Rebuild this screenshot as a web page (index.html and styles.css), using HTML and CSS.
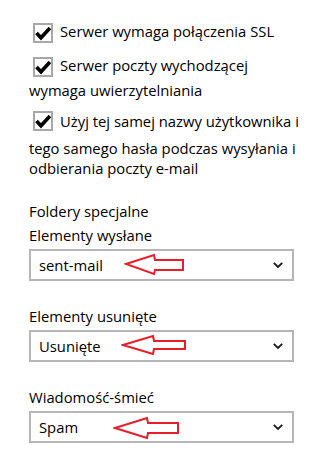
FILE: index.html
```html
<!DOCTYPE html>
<html lang="pl">
<head>
<meta charset="utf-8">
<title>Ustawienia konta</title>
<link rel="stylesheet" href="styles.css">
</head>
<body>
<main class="panel">
  <section class="options">
    <p class="opt"><span class="cb"><svg viewBox="0 0 16 16" width="16" height="16"><polyline points="1.5,8 6,12.8 15,3" /></svg></span>Serwer wymaga połączenia SSL</p>
    <p class="opt"><span class="cb"><svg viewBox="0 0 16 16" width="16" height="16"><polyline points="1.5,8 6,12.8 15,3" /></svg></span>Serwer poczty wychodzącej<br>wymaga uwierzytelniania</p>
    <p class="opt opt-tall"><span class="cb"><svg viewBox="0 0 16 16" width="16" height="16"><polyline points="1.5,8 6,12.8 15,3" /></svg></span>Użyj tej samej nazwy użytkownika i<br>tego samego hasła podczas wysyłania i<br>odbierania poczty e-mail</p>
  </section>

  <section class="folders">
    <h2 class="section-title">Foldery specjalne</h2>

    <div class="field">
      <div class="field-label">Elementy wysłane</div>
      <div class="select">
        <span class="select-value">sent-mail</span>
        <svg class="chev" viewBox="0 0 10 6" width="10" height="6"><polyline points="0.8,0.8 5,5 9.2,0.8" /></svg>
        <svg class="arrow arrow-1" viewBox="0 0 61 23" width="61" height="23"><polygon points="2,11 30,2 31,7 59,7 59,17 31,17 30,21" /></svg>
      </div>
    </div>

    <div class="field">
      <div class="field-label">Elementy usunięte</div>
      <div class="select">
        <span class="select-value">Usunięte</span>
        <svg class="chev" viewBox="0 0 10 6" width="10" height="6"><polyline points="0.8,0.8 5,5 9.2,0.8" /></svg>
        <svg class="arrow arrow-2" viewBox="0 0 66 22" width="66" height="22"><polygon points="2,11 32,2 33,7 64,7 64,15 33,15 32,20" /></svg>
      </div>
    </div>

    <div class="field">
      <div class="field-label">Wiadomość-śmieć</div>
      <div class="select">
        <span class="select-value">Spam</span>
        <svg class="chev" viewBox="0 0 10 6" width="10" height="6"><polyline points="0.8,0.8 5,5 9.2,0.8" /></svg>
        <svg class="arrow arrow-3" viewBox="0 0 67 24" width="67" height="24"><polygon points="2,12 34,2 35,7 65,7 65,17 35,17 34,22" /></svg>
      </div>
    </div>
  </section>
</main>
</body>
</html>
```

FILE: styles.css
```css
html, body {
  margin: 0;
  padding: 0;
  background: #ffffff;
}

body {
  font-family: "Open Sans", "Noto Sans", sans-serif;
  font-size: 14.8px;
  line-height: 20px;
  color: #000000;
}

.panel {
  width: 265px;
  padding: 20px 0 0 29px;
}

.options {
  display: flex;
  flex-direction: column;
  gap: 8px;
}

.opt {
  margin: 0;
  white-space: nowrap;
}

.cb {
  display: inline-block;
  box-sizing: border-box;
  width: 20px;
  height: 20px;
  border: 2px solid #a8a8a8;
  background: #ffffff;
  vertical-align: middle;
  margin: 3px 7px 3px 4px;
}

.opt-tall .cb {
  margin-bottom: 7px;
}

.cb svg {
  display: block;
}

.cb polyline {
  fill: none;
  stroke: #000000;
  stroke-width: 3.6;
}

.folders {
  margin-top: 23px;
}

.section-title {
  margin: 0 0 4px;
  font-size: 14.8px;
  font-weight: normal;
  line-height: 20px;
}

.field + .field {
  margin-top: 25px;
}

.field-label {
  margin-bottom: 4px;
}

.select {
  position: relative;
  box-sizing: border-box;
  height: 32px;
  border: 2px solid #b6b6b6;
  display: flex;
  align-items: center;
  justify-content: space-between;
  padding: 0 9px 0 8px;
}

.select-value {
  line-height: 28px;
}

.chev polyline {
  fill: none;
  stroke: #1a1a1a;
  stroke-width: 1.8;
}

.chev {
  display: block;
}

.arrow {
  position: absolute;
  display: block;
}

.arrow polygon {
  fill: none;
  stroke: #e51f2a;
  stroke-width: 2;
  stroke-linejoin: miter;
}

.arrow-1 {
  left: 93px;
  top: 2px;
}

.arrow-2 {
  left: 90px;
  top: 2px;
}

.arrow-3 {
  left: 82px;
  top: 3px;
}
```
